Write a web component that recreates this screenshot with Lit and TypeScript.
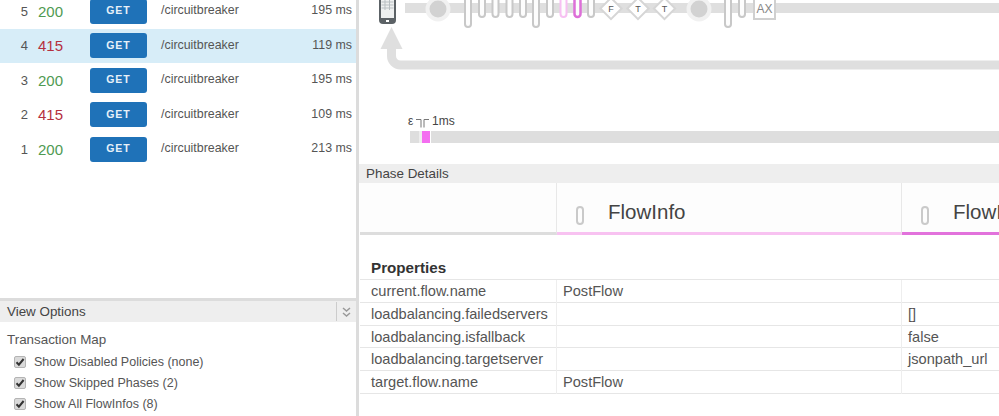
import { LitElement, html, css, svg } from "lit";
import { customElement } from "lit/decorators.js";

const rows = [
  { n: 5, code: 200, ms: 195 },
  { n: 4, code: 415, ms: 119, sel: true },
  { n: 3, code: 200, ms: 195 },
  { n: 2, code: 415, ms: 109 },
  { n: 1, code: 200, ms: 213 },
];
const opts = ["Show Disabled Policies (none)", "Show Skipped Phases (2)", "Show All FlowInfos (8)"];
const props = [
  ["current.flow.name", "PostFlow", ""],
  ["loadbalancing.failedservers", "", "[]"],
  ["loadbalancing.isfallback", "", "false"],
  ["loadbalancing.targetserver", "", "jsonpath_url"],
  ["target.flow.name", "PostFlow", ""],
];

const pill = (x: number, tall: boolean, stroke = "#c8c8c8", w = 2) =>
  svg`<rect x=${x - 3} y="-8" width="6" height=${tall ? 35 : 25} rx="3" fill="#fdfdfd" stroke=${stroke} stroke-width=${w}/>`;
const diamond = (x: number, t: string) => svg`
  <rect x=${x - 7.5} y="1" width="15" height="15" transform="rotate(45 ${x} 8.500)" fill="#fff" stroke="#d6d6d6" stroke-width="2"/>
  <text x=${x} y="12" text-anchor="middle" class="dt">${t}</text>`;
const node = (x: number) => svg`
  <circle cx=${x} cy="9" r="12.5" fill="#f1f1f1"/>
  <circle cx=${x} cy="9" r="8.5" fill="#d2d2d2"/>`;

@customElement("app-root")
export class AppRoot extends LitElement {
  static styles = css`
    :host { display: flex; width: 999px; height: 416px; overflow: hidden; background: #fff;
      font-family: "Liberation Sans", Arial, sans-serif; color: #444; }
    .left { width: 356px; height: 416px; display: flex; flex-direction: column; flex: none; }
    .gutter { width: 3px; flex: none; background: #dcdcdc; }
    .right { flex: 1; min-width: 0; display: flex; flex-direction: column; }
    .list { height: 298px; flex: none; overflow: hidden; }
    .rows { margin-top: -6px; }
    .row { height: 34.5px; display: grid; grid-template-columns: 38px 52px 57px 1fr auto; align-items: center; padding-right: 4px; }
    .row.sel { background: #d7edf8; }
    .num { font-size: 13px; color: #555; text-align: right; padding-right: 10px; }
    .code { font-size: 15px; }
    .ok { color: #4f9a52; }
    .err { color: #b5303f; }
    .btn { width: 57px; height: 25px; background: #1f72b8; border-radius: 3px; color: #e8f1f8; font-size: 10.5px; font-weight: 700;
      letter-spacing: 1px; display: flex; align-items: center; justify-content: center; padding-bottom: 2px; box-sizing: border-box; }
    .path { padding-left: 14px; font-size: 12.4px; color: #555; margin-top: -2px; }
    .ms { font-size: 12.4px; color: #555; margin-top: -2px; }
    .opts { flex: 1; border-top: 3px solid #dcdcdc; }
    .optshead { height: 21px; background: #eee; display: flex; align-items: center; padding-left: 7px; font-size: 13.4px; color: #444; }
    .optshead span { flex: 1; }
    .collapse { width: 19px; height: 19px; border-left: 1px solid #ccc; display: flex; align-items: center; justify-content: center; }
    .tm { font-size: 13.4px; color: #555; padding: 10px 0 0 7px; height: 19px; line-height: 16px; }
    .opt { height: 21px; display: flex; align-items: center; gap: 8px; padding-left: 14px; font-size: 12.5px; color: #555; }
    .cb { width: 10px; height: 10px; background: #dadada; border: 1px solid #b4b4b4; border-radius: 2px; display: flex; align-items: center; justify-content: center; flex: none; }
    .map { height: 164px; flex: none; position: relative; overflow: hidden; }
    .map svg { position: absolute; left: 0; top: 0; }
    .map text { font-family: "Liberation Sans", Arial, sans-serif; }
    .dt { font-size: 9px; fill: #555; }
    .ax { font-size: 12px; fill: #888; }
    .tl { font-size: 12px; fill: #444; }
    .phase { height: 19px; background: #eee; flex: none; display: flex; align-items: center; padding-left: 7px; font-size: 13.4px; color: #444; }
    .heads { height: 52px; display: grid; grid-template-columns: 197px 345px 1fr; background: #fdfdfd; margin-left: 1px; flex: none; }
    .head { border-bottom: 3px solid #ddd; border-right: 1px solid #e8e8e8; display: flex; align-items: flex-end; box-sizing: border-box; font-size: 20.5px; color: #444; white-space: nowrap; overflow: hidden; padding: 0 0 7px 19px; gap: 24px; }
    .head.a { border-bottom-color: #f8c2f1; }
    .head.b { border-bottom-color: #e272dc; border-right: none; padding-left: 19px; }
    .head.blank { border-bottom-color: #ddd; }
    .head i { width: 4px; height: 15px; border: 2px solid #cacaca; border-radius: 4px; flex: none; }
    .head b { font-weight: 400; line-height: 26px; }
    .h2 { margin: 22px 0 0 12px; font-size: 15.2px; font-weight: 700; color: #333; height: 22px; line-height: 21px; flex: none; }
    .tbl { margin-left: 1px; border-top: 1px solid #e6e6e6; flex: none; }
    .tr { display: grid; grid-template-columns: 197px 345px 1fr; height: 22.75px; box-sizing: border-box; border-bottom: 1px solid #e6e6e6; font-size: 14.6px; line-height: 23px; color: #555; }
    .td { padding-left: 6px; border-right: 1px solid #eee; white-space: nowrap; }
    .td:first-child { padding-left: 11px; }
    .td:last-child { border-right: none; }
  `;

  render() {
    return html`
      <div class="left">
        <div class="list"><div class="rows">
          ${rows.map(r => html`
            <div class="row ${r.sel ? "sel" : ""}">
              <span class="num">${r.n}</span>
              <span class="code ${r.code === 200 ? "ok" : "err"}">${r.code}</span>
              <span class="btn">GET</span>
              <span class="path">/circuitbreaker</span>
              <span class="ms">${r.ms} ms</span>
            </div>`)}
        </div></div>
        <div class="opts">
          <div class="optshead"><span>View Options</span>
            <div class="collapse">
              <svg width="9" height="12" viewBox="0 0 9 12" fill="none" stroke="#999" stroke-width="1.5">
                <path d="M1 2l3.500 3 3.500-3M1 7l3.500 3 3.500-3"/>
              </svg>
            </div>
          </div>
          <div class="tm">Transaction Map</div>
          ${opts.map(o => html`<div class="opt"><span class="cb">
            <svg width="10" height="10" viewBox="0 0 10 10"><path d="M1.5 5.2l2.4 2.5L8.6 2" fill="none" stroke="#333" stroke-width="2"/></svg>
          </span>${o}</div>`)}
        </div>
      </div>
      <div class="gutter"></div>
      <div class="right">
        <div class="map">
          <svg width="640" height="164" viewBox="359 0 640 164">
            <rect x="405" y="3" width="594" height="10" fill="#dfdfdf"/>
            ${node(438)}
            ${pill(468, true)}${pill(482, false)}${pill(495.5, false)}${pill(509.5, false)}${pill(523, false)}
            ${pill(536, true)}${pill(550, false)}
            ${pill(563.5, false, "#f7c0f2")}${pill(577.5, false, "#dd6fd8", 2.5)}${pill(591, false)}
            ${diamond(611, "F")}${diamond(638, "T")}${diamond(664.5, "T")}
            ${node(699)}
            ${pill(728, true)}${pill(742, false)}
            <rect x="754" y="-3" width="21" height="22" fill="#fff" stroke="#d0d0d0" stroke-width="2"/>
            <text x="764.5" y="13" text-anchor="middle" class="ax">AX</text>
            <path d="M381 -4h13a2 2 0 0 1 2 2v22a4 4 0 0 1-4 4h-9a4 4 0 0 1-4-4v-22a2 2 0 0 1 2-2z" fill="#5c6266"/>
            <rect x="381" y="-2" width="13" height="20" fill="#eef0f0"/>
            <path d="M381.5 2h12M381.5 5h12M381.5 8h12M385 -2v12M389.5 -2v12" stroke="#b9bfc2" stroke-width="1"/>
            <rect x="386" y="20" width="3" height="2" fill="#fff"/>
            <path d="M391.5 27l11 22h-22z" fill="#dfdfdf"/>
            <path d="M391.5 48v8a9 9 0 0 0 9 9h599" fill="none" stroke="#dfdfdf" stroke-width="9"/>
            <rect x="410" y="131" width="9" height="12" fill="#dedede"/>
            <rect x="419" y="131" width="3" height="12" fill="#eeeeee"/>
            <rect x="422" y="131" width="8" height="12" fill="#f46ef0"/>
            <rect x="431" y="131" width="568" height="12" fill="#dedede"/>
            <text x="408" y="125" class="tl">ε</text>
            <path d="M416 119.500h5v8M429 119.500h-5v8" fill="none" stroke="#777" stroke-width="1"/>
            <text x="432" y="125" class="tl">1ms</text>
          </svg>
        </div>
        <div class="phase">Phase Details</div>
        <div class="heads">
          <div class="head blank"></div>
          <div class="head a"><i></i><b>FlowInfo</b></div>
          <div class="head b"><i></i><b>FlowInfo</b></div>
        </div>
        <div class="h2">Properties</div>
        <div class="tbl">
          ${props.map(p => html`<div class="tr"><div class="td">${p[0]}</div><div class="td">${p[1]}</div><div class="td">${p[2]}</div></div>`)}
        </div>
      </div>
    `;
  }
}
